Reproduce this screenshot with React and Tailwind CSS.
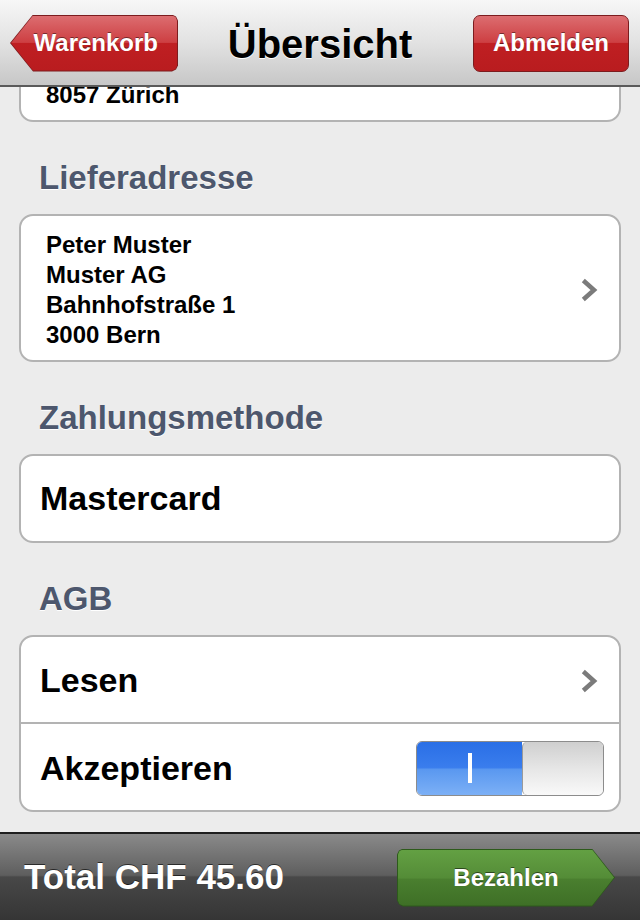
import React from "react";

const font = { fontFamily: '"Liberation Sans", Arial, sans-serif' };

function Chevron() {
  return (
    <svg width="18" height="24" viewBox="0 0 18 24" className="shrink-0">
      <polyline points="4,4 13,12 4,20" fill="none" stroke="#7b7b7b" strokeWidth="4.5" strokeLinejoin="miter" strokeLinecap="square" />
    </svg>
  );
}

function Card({ children, className = "" }) {
  return (
    <div className={"mx-[19px] rounded-[14px] border-2 border-[#b3b3b3] bg-white " + className}>
      {children}
    </div>
  );
}

function Heading({ children }) {
  return (
    <div className="mx-[39px] mt-[38px] mb-[18px] h-[36px] text-[33px] leading-[36px] font-bold text-[#4d576d] [text-shadow:0_1px_0_#ffffff]">
      {children}
    </div>
  );
}

export default function App() {
  return (
    <div style={font} className="w-[640px] h-[920px] flex flex-col bg-[#ececec] overflow-hidden">
      {/* Header */}
      <div className="relative z-10 h-[87px] shrink-0 flex items-center justify-between px-[10px] bg-gradient-to-b from-[#f7f7f7] via-[#e2e2e2] to-[#c7c7c7] border-b-2 border-[#5a5a5a]">
        {/* Back button */}
        <div className="relative w-[168px] h-[57px] mt-[1px] bg-[#7c1c1e] [clip-path:polygon(23px_0,calc(100%_-_6px)_0,calc(100%_-_2px)_2px,100%_6px,100%_calc(100%_-_6px),calc(100%_-_2px)_calc(100%_-_2px),calc(100%_-_6px)_100%,23px_100%,0_50%)]">
          <div className="absolute inset-[1px] flex items-center justify-end pr-[19px] bg-[linear-gradient(to_bottom,#dc6d70_0%,#cd3f42_48%,#bf1f22_50%,#b91c1f_100%)] [clip-path:polygon(22px_0,calc(100%_-_5px)_0,calc(100%_-_1.5px)_1.5px,100%_5px,100%_calc(100%_-_5px),calc(100%_-_1.5px)_calc(100%_-_1.5px),calc(100%_-_5px)_100%,22px_100%,0_50%)]">
            <span className="text-white font-bold text-[24px] leading-[28px] [text-shadow:0_-1px_0_rgba(0,0,0,0.45)]">Warenkorb</span>
          </div>
        </div>
        <div className="absolute left-0 right-0 top-0 h-[87px] flex items-center justify-center pointer-events-none">
          <span className="text-black font-bold text-[40px] leading-[44px] [text-shadow:0_1px_0_#ffffff]">Übersicht</span>
        </div>
        {/* Logout */}
        <div className="w-[156px] h-[57px] mt-[1px] mr-[1px] rounded-[7px] border border-[#7c1c1e] flex items-center justify-center bg-[linear-gradient(to_bottom,#dc6d70_0%,#cd3f42_48%,#bf1f22_50%,#b91c1f_100%)]">
          <span className="text-white font-bold text-[24px] leading-[28px] [text-shadow:0_-1px_0_rgba(0,0,0,0.45)]">Abmelden</span>
        </div>
      </div>

      {/* Content */}
      <div className="flex-1 overflow-hidden">
        <div className="mt-[-81px] flex flex-col">
          <Card className="px-[25px] pt-[12px] pb-[10px]">
            <div className="text-[24px] leading-[30px] font-bold text-black">
              <div>Hans Muster</div>
              <div>Hauptstrasse 12</div>
              <div>8057 Zürich</div>
            </div>
          </Card>

          <Heading>Lieferadresse</Heading>
          <Card className="pl-[25px] pr-[20px] pt-[14px] pb-[10px] flex items-center justify-between">
            <div className="text-[24px] leading-[30px] font-bold text-black">
              <div>Peter Muster</div>
              <div>Muster AG</div>
              <div>Bahnhofstraße 1</div>
              <div>3000 Bern</div>
            </div>
            <Chevron />
          </Card>

          <Heading>Zahlungsmethode</Heading>
          <Card className="h-[89px] px-[19px] flex items-center">
            <span className="text-[34px] font-bold text-black">Mastercard</span>
          </Card>

          <Heading>AGB</Heading>
          <Card className="flex flex-col">
            <div className="h-[87px] pl-[19px] pr-[20px] pt-[2px] flex items-center justify-between border-b-2 border-[#b3b3b3]">
              <span className="text-[34px] font-bold text-black">Lesen</span>
              <Chevron />
            </div>
            <div className="h-[86px] pl-[19px] pr-[15px] pt-[2px] flex items-center justify-between">
              <span className="text-[34px] font-bold text-black">Akzeptieren</span>
              <div className="w-[188px] h-[55px] rounded-[6px] border border-[#8c8c8c] overflow-hidden flex">
                <div className="flex-1 flex items-center justify-center bg-[linear-gradient(to_bottom,#2a6fe6_0%,#3a7ded_48%,#5a98f0_52%,#7cb0f6_100%)]">
                  <div className="w-[4px] h-[30px] bg-white"></div>
                </div>
                <div className="w-[81px] border-l border-[#9a9a9a] rounded-[5px] bg-[linear-gradient(to_bottom,#cfcfcf_0%,#e6e6e6_50%,#f9f9f9_100%)]"></div>
              </div>
            </div>
          </Card>
        </div>
      </div>

      {/* Bottom bar */}
      <div className="h-[88px] shrink-0 border-t-2 border-[#1e1e1e] flex items-center justify-between pl-[24px] pr-[25px] bg-[linear-gradient(to_bottom,#8a8a8a_0%,#5e5e5e_48%,#484848_50%,#353535_100%)]">
        <span className="text-white font-bold text-[35px] [text-shadow:0_-1px_0_rgba(0,0,0,0.6)]">Total CHF 45.60</span>
        <div className="relative w-[218px] h-[58px] mt-[1px] bg-[#2d5a1b] [clip-path:polygon(0_6px,2px_2px,6px_0,calc(100%_-_23px)_0,100%_50%,calc(100%_-_23px)_100%,6px_100%,2px_calc(100%_-_2px),0_calc(100%_-_6px))]">
          <div className="absolute inset-[1px] flex items-center justify-center bg-[linear-gradient(to_bottom,#63a043_0%,#548c37_50%,#4a7f2f_52%,#3e6f26_100%)] [clip-path:polygon(0_5px,1.5px_1.5px,5px_0,calc(100%_-_22px)_0,100%_50%,calc(100%_-_22px)_100%,5px_100%,1.5px_calc(100%_-_1.5px),0_calc(100%_-_5px))]">
            <span className="text-white font-bold text-[24px] leading-[28px] [text-shadow:0_-1px_0_rgba(0,0,0,0.5)]">Bezahlen</span>
          </div>
        </div>
      </div>
    </div>
  );
}
